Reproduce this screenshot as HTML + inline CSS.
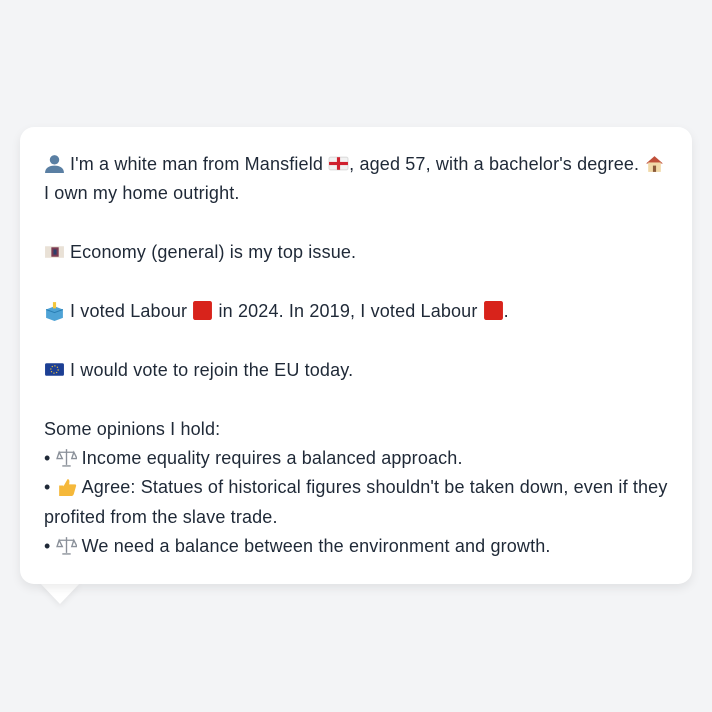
<!DOCTYPE html>
<html><head><meta charset="utf-8"><style>
html,body{margin:0;width:712px;height:712px;background:#f3f4f6;overflow:hidden}
.card{position:absolute;left:20px;top:127px;width:672px;height:457px;background:#fff;border-radius:14px;box-shadow:0 4px 10px rgba(0,0,0,0.08);box-sizing:border-box;padding:22px 24px;font-family:"Liberation Sans",sans-serif;font-size:18px;line-height:29.4px;color:#1f2937;letter-spacing:0.15px}
.tail{position:absolute;left:40px;top:583px;width:0;height:0;border-left:20px solid transparent;border-right:20px solid transparent;border-top:21px solid #fff;filter:drop-shadow(0 3px 3px rgba(0,0,0,0.06))}
.e{display:inline-block;width:21px;height:21px;vertical-align:-4px;margin-right:5px}
.m{margin-right:0}
p{margin:0;white-space:nowrap}
.gap{height:29.4px}
.c{position:relative;top:1px}
</style></head><body>
<div class="tail"></div>
<div class="card"><div class="c">
<p><svg class="e" viewBox="0 0 20 20"><circle cx="10" cy="6.5" r="4.5" fill="#5a7fa3"/><path d="M1 19c0-5 4-7 9-7s9 2 9 7z" fill="#5a7fa3"/></svg>I'm a white man from Mansfield <svg class="e m" viewBox="0 0 20 20"><rect x="1" y="4" width="18" height="12" rx="1.5" fill="#f2f2f2" stroke="#ddd"/><rect x="8.5" y="4" width="3" height="12" fill="#d0202e"/><rect x="1" y="8.5" width="18" height="3" fill="#d0202e"/></svg>, aged 57, with a bachelor's degree. <svg class="e m" viewBox="0 0 20 20"><path d="M2 10L10 3l8 7z" fill="#c0503a"/><rect x="4" y="9" width="12" height="9" fill="#f1d9a8"/><rect x="8.5" y="12" width="3" height="6" fill="#8a5a3a"/></svg><br>I own my home outright.</p>
<div class="gap"></div>
<p><svg class="e" viewBox="0 0 20 20"><rect x="1" y="5" width="18" height="11" fill="#e9e1d6"/><rect x="7" y="6" width="7" height="9" fill="#7a3a52"/><rect x="9" y="8" width="3" height="5" fill="#2d3e6a"/></svg>Economy (general) is my top issue.</p>
<div class="gap"></div>
<p><svg class="e" viewBox="0 0 20 20"><path d="M2 9l8-3 8 3v8l-8 3-8-3z" fill="#4ea3d6"/><path d="M2 9l8 3 8-3" fill="none" stroke="#2a7fb5"/><rect x="8.5" y="2" width="3" height="6" fill="#f4c63c"/></svg>I voted Labour <svg class="e m" viewBox="0 0 20 20"><rect x="1" y="1" width="18" height="18" rx="2" fill="#d8231b"/></svg> in 2024. In 2019, I voted Labour <svg class="e m" viewBox="0 0 20 20"><rect x="1" y="1" width="18" height="18" rx="2" fill="#d8231b"/></svg>.</p>
<div class="gap"></div>
<p><svg class="e" viewBox="0 0 20 20"><rect x="1" y="4" width="18" height="12" rx="1.5" fill="#1c3f94"/><circle cx="10" cy="10" r="3.5" fill="none" stroke="#f4c63c" stroke-dasharray="1.2 1.5"/></svg>I would vote to rejoin the EU today.</p>
<div class="gap"></div>
<p>Some opinions I hold:<br>
• <svg class="e" viewBox="0 0 20 20"><g fill="none" stroke="#8a9099" stroke-width="1.3"><path d="M10 2v15M3 5h14M6 18h8"/><path d="M3 5l-2 6h5zM17 5l-2 6h5z"/></g></svg>Income equality requires a balanced approach.<br>
• <svg class="e" viewBox="0 0 20 20"><path d="M3 9h4v10H3zM7 10l4-7c2 0 2 2 1.5 5H18c1 0 1.5 1 1 2l-2 7c-.3 1-1 2-2 2H7z" fill="#f5b83a"/></svg>Agree: Statues of historical figures shouldn't be taken down, even if they<br>profited from the slave trade.<br>
• <svg class="e" viewBox="0 0 20 20"><g fill="none" stroke="#8a9099" stroke-width="1.3"><path d="M10 2v15M3 5h14M6 18h8"/><path d="M3 5l-2 6h5zM17 5l-2 6h5z"/></g></svg>We need a balance between the environment and growth.</p>
</div></div>
</body></html>
